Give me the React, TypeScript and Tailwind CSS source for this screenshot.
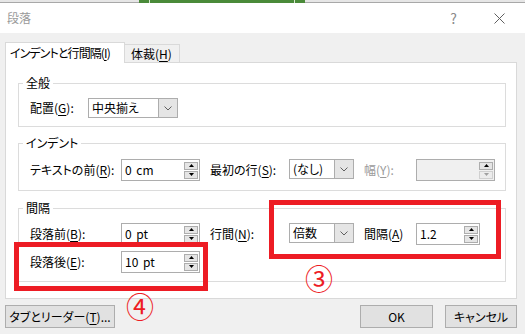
import type { ReactNode } from 'react'
import clsx from 'clsx'

function U({ children }: { children: ReactNode }) {
  return <span className="underline underline-offset-2">{children}</span>
}

function Arrow({ up, dim }: { up?: boolean; dim?: boolean }) {
  return (
    <svg width="5" height="3" viewBox="0 0 5 3">
      <polygon points={up ? '0,3 2.5,0 5,3' : '0,0 2.5,3 5,0'} fill={dim ? '#a0a0a0' : '#000'} />
    </svg>
  )
}

function Spinner({ disabled }: { disabled?: boolean }) {
  return (
    <div className="flex w-[14px] flex-col gap-px">
      <div className="flex h-[8px] items-center justify-center border border-[#adadad] bg-[#e5e5e5]">
        <Arrow up />
      </div>
      <div
        className={clsx(
          'flex h-[8px] items-center justify-center border',
          disabled ? 'border-[#d0d0d0] bg-[#ececec]' : 'border-[#adadad] bg-[#e5e5e5]',
        )}
      >
        <Arrow dim={disabled} />
      </div>
    </div>
  )
}

function NumInput({ value, className, disabled }: { value?: string; className: string; disabled?: boolean }) {
  return (
    <div
      className={clsx(
        'flex h-[22px] shrink-0 items-center border border-[#adadad] pl-[3px] pr-[1px]',
        disabled ? 'bg-[#f0f0f0]' : 'bg-white',
        className,
      )}
    >
      <span className="flex-1 whitespace-pre [font-feature-settings:normal] [word-spacing:2px]">{value}</span>
      <Spinner disabled={disabled} />
    </div>
  )
}

function Select({ value, className }: { value: string; className: string }) {
  return (
    <div className={clsx('flex h-[20px] shrink-0 border border-[#adadad] bg-white', className)}>
      <span className="flex flex-1 items-center pl-[3px]">{value}</span>
      <span className="flex w-[19px] items-center justify-center border-l border-[#adadad] bg-[#e5e5e5]">
        <svg width="8" height="5" viewBox="0 0 8 5">
          <polyline points="0.5,0.5 4,4 7.5,0.5" fill="none" stroke="#606060" strokeWidth="1" />
        </svg>
      </span>
    </div>
  )
}

function Group({ title, className, children }: { title: string; className: string; children: ReactNode }) {
  return (
    <fieldset className={clsx('w-[488px] border border-[#dcdcdc]', className)}>
      <legend className="ml-[4px] px-[3px] leading-[16px]">{title}</legend>
      {children}
    </fieldset>
  )
}

function Button({ className, children }: { className: string; children: ReactNode }) {
  return (
    <div
      className={clsx(
        'flex h-[23px] items-center justify-center whitespace-nowrap border border-[#adadad] bg-[#e1e1e1]',
        className,
      )}
    >
      {children}
    </div>
  )
}

export default function App() {
  return (
    <div className="relative flex h-[334px] w-[525px] flex-col overflow-hidden bg-[#f0f0f0] font-['Noto_Sans_CJK_JP',sans-serif] text-[12px] leading-[16px] text-black [font-feature-settings:'palt']">
      {/* window behind */}
      <div className="flex h-[3px]">
        <div className="w-[139px] border-b border-[#a8a8a8] bg-[#e6e6e6]" />
        <div className="flex w-[166px] justify-between bg-[#4a8a39] px-[10px]">
          <span className="w-px bg-[#d8e8d0]" />
          <span className="w-px bg-[#d8e8d0]" />
        </div>
        <div className="flex-1 border-b border-[#a8a8a8] bg-[#e6e6e6]" />
      </div>

      {/* title bar */}
      <div className="flex h-[30px] items-center justify-between bg-white pl-[7px] pr-[20px]">
        <span className="text-[#9a9a9a]">段落</span>
        <div className="flex items-center gap-[37px]">
          <span className="text-[14px] text-[#8a8a8a]">?</span>
          <svg width="11" height="11" viewBox="0 0 11 11">
            <path d="M0.5 0.5 L10.5 10.5 M10.5 0.5 L0.5 10.5" stroke="#606060" strokeWidth="1" />
          </svg>
        </div>
      </div>

      <div className="flex flex-col pl-[5px] pr-[8px] pt-[9px]">
        {/* tabs */}
        <div className="flex items-end">
          <div className="relative z-10 -mb-px flex h-[21px] w-[120px] items-center whitespace-nowrap border border-b-0 border-[#d9d9d9] bg-white pl-[4px] tracking-[-0.9px]">
            インデントと行間隔(<U>I</U>)
          </div>
          <div className="flex h-[18px] w-[55px] items-center whitespace-nowrap border border-b-0 border-l-0 border-[#d9d9d9] bg-[#f0f0f0] pl-[6px]">
            体裁(<U>H</U>)
          </div>
        </div>

        {/* panel */}
        <div className="flex h-[237px] w-[512px] flex-col border border-[#d9d9d9] bg-white pl-[12px]">
          <Group title="全般" className="mt-[12px]">
            <div className="flex items-center pb-[8px] pl-[11px] pt-[7px]">
              <span className="w-[58px]">
                配置(<U>G</U>):
              </span>
              <Select value="中央揃え" className="w-[90px]" />
            </div>
          </Group>

          <Group title="インデント" className="mt-[8px]">
            <div className="flex items-start pb-[9px] pl-[11px] pt-[8px]">
              <span className="flex h-[22px] w-[91px] items-center">
                テキストの前(<U>R</U>):
              </span>
              <NumInput value="0 cm" className="w-[79px]" />
              <span className="ml-[10px] flex h-[22px] w-[79px] items-center">
                最初の行(<U>S</U>):
              </span>
              <Select value="(なし)" className="w-[65px]" />
              <span className="ml-[10px] flex h-[22px] w-[52px] items-center text-[#9a9a9a]">
                幅(<U>Y</U>):
              </span>
              <NumInput className="w-[79px]" disabled />
            </div>
          </Group>

          <Group title="間隔" className="mt-[9px]">
            <div className="flex flex-col gap-[6px] pb-[8px] pl-[11px] pt-[7px]">
              <div className="flex items-start">
                <span className="flex h-[22px] w-[91px] items-center">
                  段落前(<U>B</U>):
                </span>
                <NumInput value="0 pt" className="w-[79px]" />
                <span className="ml-[10px] flex h-[22px] w-[79px] items-center">
                  行間(<U>N</U>):
                </span>
                <Select value="倍数" className="w-[65px]" />
                <span className="ml-[10px] flex h-[22px] w-[52px] items-center">
                  間隔(<U>A</U>)
                </span>
                <NumInput value="1.2" className="w-[64px]" />
              </div>
              <div className="flex items-start">
                <span className="flex h-[22px] w-[91px] items-center">
                  段落後(<U>E</U>):
                </span>
                <NumInput value="10 pt" className="w-[79px]" />
              </div>
            </div>
          </Group>
        </div>

        {/* buttons */}
        <div className="mt-[6px] flex items-center">
          <Button className="w-[110px]">
            タブとリーダー(<U>T</U>)...
          </Button>
          <Button className="ml-auto w-[73px]">OK</Button>
          <Button className="ml-[12px] w-[72px]">キャンセル</Button>
        </div>
      </div>

      {/* annotations */}
      <div className="absolute left-[269px] top-[200px] h-[59px] w-[232px] border-[5px] border-[#ed1c24]" />
      <div className="absolute left-[14px] top-[242px] h-[49px] w-[194px] border-[5px] border-[#ed1c24]" />
      <span className="absolute left-[305px] top-[264px] flex h-[28px] w-[28px] items-center justify-center text-[28px] leading-none text-[#ed1c24]">
        ③
      </span>
      <span className="absolute left-[126px] top-[292px] flex h-[28px] w-[28px] items-center justify-center text-[28px] leading-none text-[#ed1c24]">
        ④
      </span>
    </div>
  )
}
